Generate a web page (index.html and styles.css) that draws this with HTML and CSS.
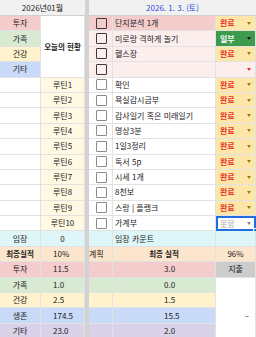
FILE: index.html
```html
<!DOCTYPE html>
<html lang="ko">
<head>
<meta charset="utf-8">
<link rel="stylesheet" href="styles.css">
</head>
<body>
<div class="sheet">
  <div class="sep"></div>
  <div class="hd hd-l">2026년01월</div>
  <div class="hd hd-r">2026. 1. 3. (토)</div>

  <div class="c lab pink">투자</div>
  <div class="c today">오늘의 현황</div>
  <div class="c cb pink"><span class="box dark"></span></div>
  <div class="c txt pink">단지분석 1개</div>
  <div class="c st done">완료<i class="arr"></i></div>

  <div class="c lab green">가족</div>
  <div class="c cb lpink"><span class="box dark"></span></div>
  <div class="c txt lpink">미로랑 격하게 놀기</div>
  <div class="c st part">일부<i class="arr"></i></div>

  <div class="c lab yellow">건강</div>
  <div class="c cb lpink"><span class="box dark"></span></div>
  <div class="c txt lpink">헬스장</div>
  <div class="c st done">완료<i class="arr"></i></div>

  <div class="c lab blue">기타</div>
  <div class="c cb lpink"><span class="box dark"></span></div>
  <div class="c txt lpink"></div>
  <div class="c st empty lpink"><i class="arr"></i></div>

  <div class="c"></div><div class="c rt">루틴1</div>
  <div class="c cb"><span class="box"></span></div><div class="c txt">확인</div>
  <div class="c st done">완료<i class="arr"></i></div>

  <div class="c"></div><div class="c rt">루틴2</div>
  <div class="c cb"><span class="box"></span></div><div class="c txt">욕실감시금부</div>
  <div class="c st done">완료<i class="arr"></i></div>

  <div class="c"></div><div class="c rt">루틴3</div>
  <div class="c cb"><span class="box"></span></div><div class="c txt">감사일기 혹은 미래일기</div>
  <div class="c st done">완료<i class="arr"></i></div>

  <div class="c"></div><div class="c rt">루틴4</div>
  <div class="c cb"><span class="box"></span></div><div class="c txt">명상3분</div>
  <div class="c st done">완료<i class="arr"></i></div>

  <div class="c"></div><div class="c rt">루틴5</div>
  <div class="c cb"><span class="box"></span></div><div class="c txt">1일3정리</div>
  <div class="c st done">완료<i class="arr"></i></div>

  <div class="c"></div><div class="c rt">루틴6</div>
  <div class="c cb"><span class="box"></span></div><div class="c txt">독서 5p</div>
  <div class="c st done">완료<i class="arr"></i></div>

  <div class="c"></div><div class="c rt">루틴7</div>
  <div class="c cb"><span class="box"></span></div><div class="c txt">시세 1개</div>
  <div class="c st done">완료<i class="arr"></i></div>

  <div class="c"></div><div class="c rt">루틴8</div>
  <div class="c cb"><span class="box"></span></div><div class="c txt">8천보</div>
  <div class="c st done">완료<i class="arr"></i></div>

  <div class="c"></div><div class="c rt">루틴9</div>
  <div class="c cb"><span class="box"></span></div><div class="c txt">스랑 | 플랭크</div>
  <div class="c st done">완료<i class="arr"></i></div>

  <div class="c"></div><div class="c rt">루틴10</div>
  <div class="c cb"><span class="box"></span></div><div class="c txt">가계부</div>
  <div class="c st sel">못함<i class="arr"></i><span class="handle"></span></div>

  <div class="c lab cyan">임장</div>
  <div class="c val cyan ctr">0</div>
  <div class="c cyan"></div>
  <div class="c txt cyan">임장 카운트</div>
  <div class="c cyan"></div>

  <div class="c lab peach bold">최종실적</div>
  <div class="c val peach">10%</div>
  <div class="c peach plan">계획</div>
  <div class="c peach ctr bold">최종 실적</div>
  <div class="c peach ctr">96%</div>

  <div class="c lab pink">투자</div>
  <div class="c val pink">11.5</div>
  <div class="c pink"></div>
  <div class="c num pink">3.0</div>
  <div class="c gray ctr">지출</div>

  <div class="c lab green">가족</div>
  <div class="c val green">1.0</div>
  <div class="c green"></div>
  <div class="c num green">0.0</div>
  <div class="c dash">–</div>

  <div class="c lab yellow">건강</div>
  <div class="c val yellow">2.5</div>
  <div class="c yellow"></div>
  <div class="c num yellow">1.5</div>

  <div class="c lab blue">생존</div>
  <div class="c val blue">174.5</div>
  <div class="c blue"></div>
  <div class="c num blue">15.5</div>

  <div class="c lab purple">기타</div>
  <div class="c val purple">23.0</div>
  <div class="c purple"></div>
  <div class="c num purple">2.0</div>
</div>
</body>
</html>
```

FILE: styles.css
```css
* { box-sizing: border-box; margin: 0; padding: 0; }
html, body { width: 256px; height: 337px; overflow: hidden; background: #fff; }
body {
  font-family: "Noto Sans CJK KR", "Noto Sans", sans-serif;
  font-size: 8px;
  color: #222;
  line-height: 1;
}
.sheet {
  display: grid;
  grid-template-columns: 41px 44px 4px 24px 103px 40px;
  grid-template-rows: 16px;
  grid-auto-rows: 15.4px;
}
.sep { grid-column: 3; grid-row: 1 / span 23; background: #d2d2d2; }
.hd {
  grid-row: 1;
  background: #f1f1f1;
  border-bottom: 1px solid #d0d0d0;
  display: flex; align-items: center; justify-content: center;
}
.hd-l { grid-column: 1 / span 2; }
.hd-r { grid-column: 4 / span 3; color: #2b4fd6; }
.c {
  border-right: 1px solid #e2e2e2;
  border-bottom: 1px solid #e2e2e2;
  display: flex; align-items: center;
  white-space: nowrap; overflow: hidden;
  position: relative;
}
.lab, .rt, .ctr { justify-content: center; }
.today { grid-row: span 4; justify-content: center; font-weight: 700; font-size: 7.5px; }
.bold { font-weight: 700; font-size: 7.5px; }
.cb { justify-content: center; padding-left: 2px; }
.box { width: 11px; height: 11px; border: 1px solid #8a8a8a; border-radius: 1px; background: transparent; }
.box.dark { border: 1.5px solid #3a3a3a; }
.txt { padding-left: 2px; }
.val { padding-left: 12px; }
.val.ctr { padding-left: 0; }
.num { padding-left: 51px; }
.plan { padding-left: 0; }
.st {
  justify-content: space-between;
  padding: 0 4px 0 4px;
  font-weight: 700;
  overflow: visible;
}
.arr {
  display: block;
  width: 0; height: 0;
  border-left: 2.5px solid transparent;
  border-right: 2.5px solid transparent;
  border-top: 3px solid #9a7a10;
}
.done { background: #fde7a8; color: #e8322a; }
.part { background: #3d9b4e; color: #fff; }
.part .arr { border-top-color: #1b1b1b; }
.empty { justify-content: flex-end; }
.empty .arr { border-top-color: #e8322a; }
.sel {
  border: 2px solid #1f6fe0;
  color: #a8a8a8;
  font-weight: 400;
  padding: 0 3px 0 2px;
}
.sel .arr { border-top-color: #8a8a8a; }
.handle {
  position: absolute; right: -3px; bottom: -3px;
  width: 4px; height: 4px; background: #1f6fe0;
  border: 1px solid #fff;
}
.dash { grid-column: 6; grid-row: span 5; justify-content: flex-end; padding-right: 6px; background: #fff; }

.pink { background: #f4cccc; }
.lpink { background: #fdeeee; }
.green { background: #d9ead3; }
.yellow { background: #fff2cc; }
.blue { background: #c9daf8; }
.purple { background: #d9d2e9; }
.cyan { background: #dff6f9; }
.peach { background: #fce5cd; }
.gray { background: #cccccc; }
.rt { background: #fff8e3; }
```
